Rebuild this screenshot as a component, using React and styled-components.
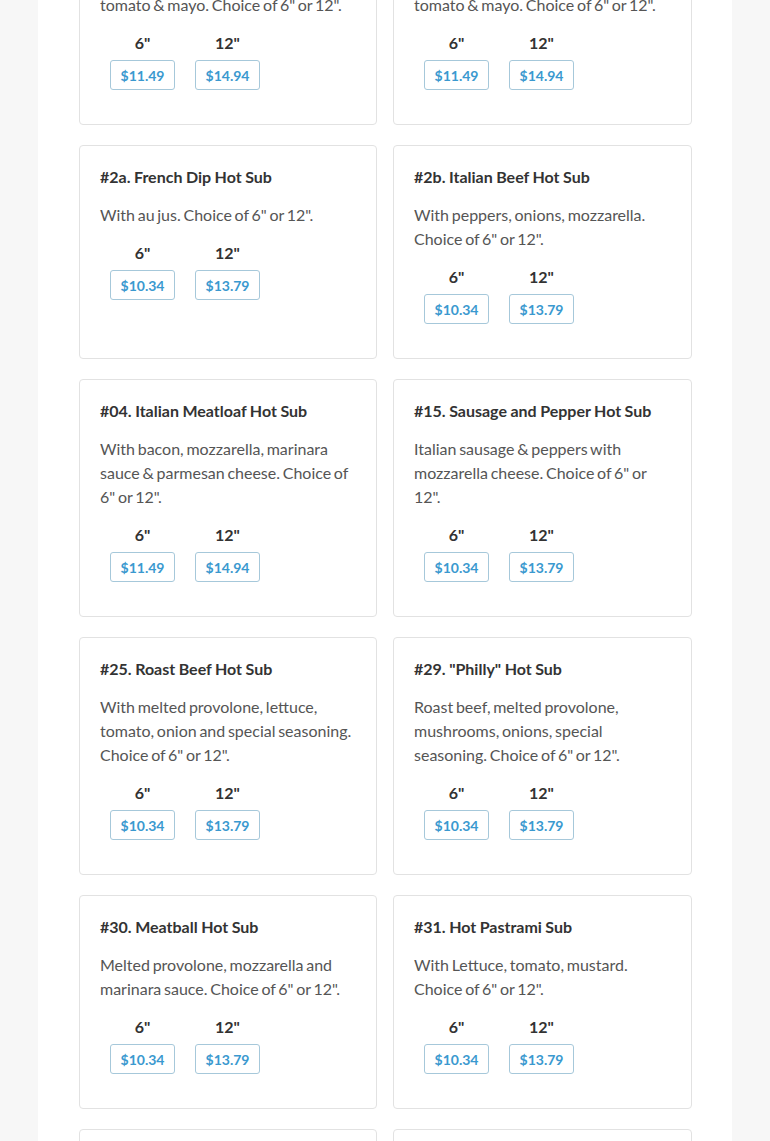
import React from "react";
import styled, { createGlobalStyle } from "styled-components";

const GlobalStyle = createGlobalStyle`
  html, body {
    margin: 0;
    padding: 0;
    background: #f7f7f7;
    font-family: Lato, "Open Sans", "Liberation Sans", sans-serif;
    overflow: hidden;
  }
  * { box-sizing: border-box; }
`;

const Page = styled.div`
  width: 694px;
  margin: 0 auto;
  background: #ffffff;
  padding: 0 40px 40px 41px;
  min-height: 1141px;
`;

/* the screenshot is taken scrolled: the first row is partly above the fold */
const Menu = styled.div`
  display: grid;
  grid-template-columns: 298px 299px;
  column-gap: 16px;
  row-gap: 20px;
  margin-top: -89px;
`;

const Card = styled.div`
  border: 1px solid #e2e2e2;
  border-radius: 4px;
  background: #fff;
  padding: 19px 20px 20px 20px;
  display: flex;
  flex-direction: column;
`;

const Title = styled.h3`
  margin: 0 0 14px;
  font-size: 16px;
  line-height: 24px;
  font-weight: 700;
  color: #333333;
  word-spacing: -0.4px;
`;

const Desc = styled.p`
  margin: 0;
  font-size: 16px;
  line-height: 24px;
  font-weight: 400;
  color: #555555;
  word-spacing: -1.4px;
`;

const Sizes = styled.div`
  display: flex;
  margin: 14px 0 14px;
`;

const SizeCol = styled.div`
  width: 85px;
  display: flex;
  flex-direction: column;
  align-items: center;
  gap: 5px;
`;

const SizeLabel = styled.div`
  font-size: 16px;
  line-height: 24px;
  font-weight: 700;
  color: #333333;
`;

const PriceButton = styled.button`
  height: 30px;
  width: 65px;
  padding: 0;
  border: 1px solid #a6c8da;
  border-radius: 3px;
  background: #ffffff;
  color: #3a99cf;
  font-family: Lato, "Open Sans", "Liberation Sans", sans-serif;
  font-size: 14px;
  font-weight: 700;
  cursor: pointer;
`;

const items = [
  {
    title: "#1. Italian Cold Sub",
    desc: "Ham, salami, provolone, lettuce,",
    desc2: "tomato & mayo. Choice of 6\" or 12\".",
    p: ["$11.49", "$14.94"],
  },
  {
    title: "#1a. Turkey Club Sub",
    desc: "Turkey, bacon, provolone, lettuce,",
    desc2: "tomato & mayo. Choice of 6\" or 12\".",
    p: ["$11.49", "$14.94"],
  },
  {
    title: "#2a. French Dip Hot Sub",
    desc: "With au jus. Choice of 6\" or 12\".",
    p: ["$10.34", "$13.79"],
  },
  {
    title: "#2b. Italian Beef Hot Sub",
    desc: "With peppers, onions, mozzarella. Choice of 6\" or 12\".",
    p: ["$10.34", "$13.79"],
  },
  {
    title: "#04. Italian Meatloaf Hot Sub",
    desc: "With bacon, mozzarella, marinara sauce & parmesan cheese. Choice of 6\" or 12\".",
    p: ["$11.49", "$14.94"],
  },
  {
    title: "#15. Sausage and Pepper Hot Sub",
    desc: "Italian sausage & peppers with mozzarella cheese. Choice of 6\" or 12\".",
    p: ["$10.34", "$13.79"],
  },
  {
    title: "#25. Roast Beef Hot Sub",
    desc: "With melted provolone, lettuce, tomato, onion and special seasoning. Choice of 6\" or 12\".",
    p: ["$10.34", "$13.79"],
  },
  {
    title: "#29. \"Philly\" Hot Sub",
    desc: "Roast beef, melted provolone, mushrooms, onions, special seasoning. Choice of 6\" or 12\".",
    p: ["$10.34", "$13.79"],
  },
  {
    title: "#30. Meatball Hot Sub",
    desc: "Melted provolone, mozzarella and marinara sauce. Choice of 6\" or 12\".",
    p: ["$10.34", "$13.79"],
  },
  {
    title: "#31. Hot Pastrami Sub",
    desc: "With Lettuce, tomato, mustard. Choice of 6\" or 12\".",
    p: ["$10.34", "$13.79"],
  },
  {
    title: "#32. Chicken Parmesan Hot Sub",
    desc: "With mozzarella and marinara sauce. Choice of 6\" or 12\".",
    p: ["$10.34", "$13.79"],
  },
  {
    title: "#33. Hot Ham & Cheese Sub",
    desc: "With melted provolone and mustard. Choice of 6\" or 12\".",
    p: ["$10.34", "$13.79"],
  },
];

export default function App() {
  return (
    <>
      <GlobalStyle />
      <Page>
        <Menu>
          {items.map((it) => (
            <Card key={it.title}>
              <Title>{it.title}</Title>
              <Desc>
                {it.desc}
                {it.desc2 && (
                  <>
                    <br />
                    {it.desc2}
                  </>
                )}
              </Desc>
              <Sizes>
                <SizeCol>
                  <SizeLabel>6"</SizeLabel>
                  <PriceButton>{it.p[0]}</PriceButton>
                </SizeCol>
                <SizeCol>
                  <SizeLabel>12"</SizeLabel>
                  <PriceButton>{it.p[1]}</PriceButton>
                </SizeCol>
              </Sizes>
            </Card>
          ))}
        </Menu>
      </Page>
    </>
  );
}
